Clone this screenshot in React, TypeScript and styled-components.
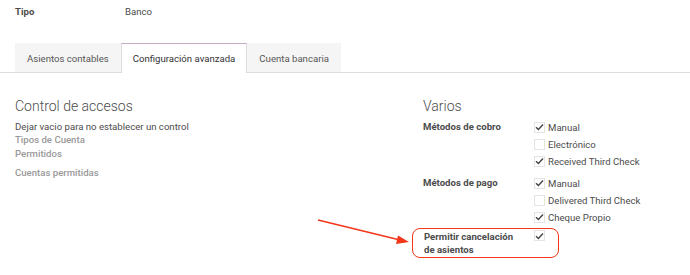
import React from 'react';
import styled, { createGlobalStyle } from 'styled-components';

const GlobalStyle = createGlobalStyle`
  body {
    margin: 0;
    background: #fff;
    font-family: Roboto, "Noto Sans", sans-serif;
    font-size: 9.6px;
    color: #4c4c4c;
  }
`;

const Page = styled.div`
  position: relative;
  width: 690px;
  height: 275px;
  overflow: hidden;
  padding-top: 3px;
  box-sizing: border-box;
`;

const FieldRow = styled.div`
  display: flex;
  padding-left: 15px;
  height: 16px;
  align-items: center;
`;

const FieldLabel = styled.div`
  width: 110px;
  font-weight: bold;
  color: #4c4c4c;
`;

const TabBar = styled.div`
  display: flex;
  margin-top: 24px;
  padding-left: 15px;
  border-bottom: 1px solid #ddd;
`;

const Tab = styled.div<{ $active?: boolean }>`
  height: ${p => (p.$active ? 30 : 29)}px;
  padding: 0 11px;
  display: flex;
  align-items: center;
  font-size: 9.6px;
  color: ${p => (p.$active ? '#333' : '#555')};
  background: ${p => (p.$active ? '#fff' : '#f5f5f5')};
  border: 1px solid ${p => (p.$active ? '#ddd' : 'transparent')};
  border-top-color: ${p => (p.$active ? '#c8a8c4' : 'transparent')};
  border-bottom: none;
  margin-bottom: -1px;
  box-sizing: border-box;
`;

const Columns = styled.div`
  display: grid;
  grid-template-columns: 408px 1fr;
  padding-left: 15px;
  margin-top: 24px;
`;

const Heading = styled.div`
  font-size: 14px;
  font-weight: 300;
  color: #4c4c4c;
  margin-bottom: 5px;
  line-height: 18px;
`;

const Note = styled.div`
  font-size: 9.6px;
  color: #4c4c4c;
  line-height: 13px;
`;

const MutedLabel = styled.div<{ $gap?: number }>`
  font-size: 9.6px;
  font-weight: 500;
  color: #999;
  line-height: 14px;
  margin-top: ${p => p.$gap ?? 0}px;
`;

const Group = styled.div`
  display: grid;
  grid-template-columns: 111px 1fr;
  row-gap: 8px;
  align-items: start;
`;

const GroupLabel = styled.div<{ $tight?: boolean }>`
  font-size: 9.6px;
  font-weight: bold;
  color: #4c4c4c;
  line-height: ${p => (p.$tight ? 13 : 14)}px;
`;

const Options = styled.div`
  display: flex;
  flex-direction: column;
  gap: 3px;
`;

const Option = styled.div`
  display: flex;
  align-items: center;
  gap: 2px;
  height: 14px;
  font-size: 9.6px;
  color: #4c4c4c;
`;

const Box = styled.span`
  width: 11px;
  height: 11px;
  border: 1px solid #e4e4e4;
  display: inline-flex;
  align-items: center;
  justify-content: center;
  box-sizing: border-box;
  margin-right: 1px;
`;

const Highlight = styled.div`
  grid-column: 1 / 3;
  display: grid;
  grid-template-columns: 109.5px 1fr;
  margin: -4px 0 0 -11px;
  padding: 1px 0 1px 11px;
  width: 134px;
  border: 1.5px solid #f2361a;
  border-radius: 8px;
`;

const Arrow = styled.svg`
  position: absolute;
  left: 316px;
  top: 216px;
`;

const Check = ({ on }: { on?: boolean }) => (
  <Box>
    {on && (
      <svg width="9" height="8" viewBox="0 0 9 8">
        <path d="M1 4.2 L3.4 6.5 L8 1.5" fill="none" stroke="#444" strokeWidth="1.4" />
      </svg>
    )}
  </Box>
);

const App: React.FC = () => (
  <Page>
    <GlobalStyle />
    <FieldRow>
      <FieldLabel>Tipo</FieldLabel>
      <span>Banco</span>
    </FieldRow>

    <TabBar>
      <Tab>Asientos contables</Tab>
      <Tab $active>Configuración avanzada</Tab>
      <Tab>Cuenta bancaria</Tab>
    </TabBar>

    <Columns>
      <div>
        <Heading>Control de accesos</Heading>
        <Note>Dejar vacio para no establecer un control</Note>
        <MutedLabel>Tipos de Cuenta</MutedLabel>
        <MutedLabel>Permitidos</MutedLabel>
        <MutedLabel $gap={5}>Cuentas permitidas</MutedLabel>
      </div>
      <div>
        <Heading>Varios</Heading>
        <Group>
          <GroupLabel>Métodos de cobro</GroupLabel>
          <Options>
            <Option><Check on />Manual</Option>
            <Option><Check />Electrónico</Option>
            <Option><Check on />Received Third Check</Option>
          </Options>
          <GroupLabel>Métodos de pago</GroupLabel>
          <Options>
            <Option><Check on />Manual</Option>
            <Option><Check />Delivered Third Check</Option>
            <Option><Check on />Cheque Propio</Option>
          </Options>
          <Highlight>
            <GroupLabel $tight>Permitir cancelación<br />de asientos</GroupLabel>
            <div><Check on /></div>
          </Highlight>
        </Group>
      </div>
    </Columns>

    <Arrow width="96" height="32" viewBox="0 0 96 32">
      <line x1="2" y1="4" x2="84" y2="24" stroke="#f2361a" strokeWidth="1.5" />
      <path d="M93 26 L82 19.5 L80 28 Z" fill="#f2361a" />
    </Arrow>
  </Page>
);

export default App;
